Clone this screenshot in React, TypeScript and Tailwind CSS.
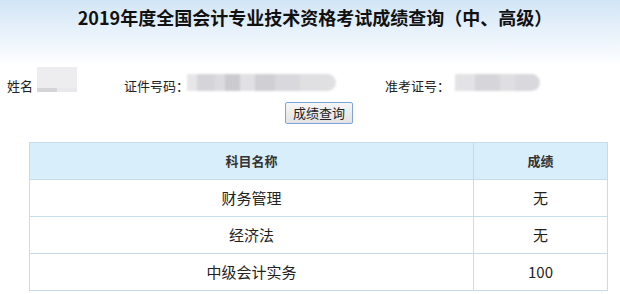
const FONT = "font-['Microsoft_YaHei','Noto_Sans_CJK_SC',sans-serif]"

interface ScoreRow { subject: string; score: string }

const rows: ScoreRow[] = [
  { subject: '财务管理', score: '无' },
  { subject: '经济法', score: '无' },
  { subject: '中级会计实务', score: '100' },
]

// blurred-out personal data, drawn as a row of grey mosaic tiles
function Mosaic({ tiles, className }: { tiles: [number, string][]; className: string }) {
  return (
    <div className={`flex overflow-hidden rounded-r-full blur-[1px] ${className}`}>
      {tiles.map(([w, c], i) => (
        <div key={i} className="h-full shrink-0" style={{ width: w, background: c }} />
      ))}
    </div>
  )
}

export default function App() {
  return (
    <div className={`w-[620px] h-[294px] overflow-hidden bg-white text-[#222] ${FONT}`}>
      <div className="h-[66px] bg-linear-to-b from-[#d2e5f6] to-white pl-[10px] pt-[4px]">
        <h1 className="text-center text-[18px] font-bold leading-[26px] text-[#111]">
          2019年度全国会计专业技术资格考试成绩查询（中、高级）
        </h1>
      </div>

      <div className="flex h-[28px] items-start pl-[7px] text-[13px]">
        <span className="mt-[10px] leading-[20px]">姓名</span>
        <div className="ml-[4px] mt-[1px] flex h-[25px] w-[40px] flex-col blur-[0.5px]">
          <div className="h-[21px] bg-[#ededef]" />
          <div className="flex h-[4px]">
            <div className="w-[20px] bg-[#d5d5d7]" />
            <div className="w-[20px] bg-[#e9e9eb]" />
          </div>
        </div>
        <span className="ml-[47px] mt-[10px] leading-[20px]">证件号码：</span>
        <Mosaic
          className="-ml-[2px] mt-[8px] h-[17px] w-[149px]"
          tiles={[
            [10, '#e6e6e8'], [18, '#d5d5d9'], [10, '#dcdce0'], [15, '#cbcbcf'],
            [15, '#e1e1e4'], [20, '#d0d0d4'], [25, '#d9d9dd'], [36, '#e0e0e3'],
          ]}
        />
        <span className="ml-[49px] mt-[10px] leading-[20px]">准考证号：</span>
        <Mosaic
          className="ml-[5px] mt-[8px] h-[17px] w-[85px]"
          tiles={[[20, '#e3e3e5'], [25, '#d6d6da'], [15, '#dfdfe1'], [25, '#d9d9dd']]}
        />
      </div>

      <div className="mt-[8px] flex pl-[285px]">
        <button
          type="button"
          className="h-[22px] w-[68px] rounded-[2px] border border-[#7aa6d9] bg-linear-to-b from-[#f6f6f6] to-[#e3e3e3] text-[13px] leading-[20px] text-[#222]"
        >
          成绩查询
        </button>
      </div>

      <table className="ml-[29px] mt-[18px] w-[579px] border-collapse">
        <thead>
          <tr className="h-[37px] bg-[#d9eefb]">
            <th className="w-[444px] border border-[#c3dbea] text-[13px] font-bold text-[#333]">科目名称</th>
            <th className="border border-[#c3dbea] text-[13px] font-bold text-[#333]">成绩</th>
          </tr>
        </thead>
        <tbody>
          {rows.map((r) => (
            <tr key={r.subject} className="h-[37px]">
              <td className="border border-[#c9dde9] text-center text-[15px]">{r.subject}</td>
              <td className="border border-[#c9dde9] text-center text-[15px]">{r.score}</td>
            </tr>
          ))}
        </tbody>
      </table>
    </div>
  )
}
